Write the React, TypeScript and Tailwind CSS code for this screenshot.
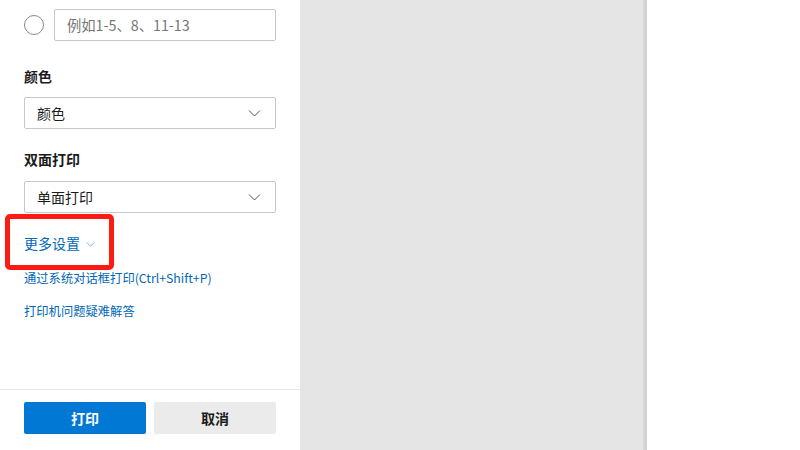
const font = { fontFamily: '"Noto Sans CJK SC", "Noto Sans", sans-serif' };

function Chevron({ className }: { className: string }) {
  return (
    <svg viewBox="0 0 12 7" className={className} fill="none">
      <path d="M0.5 0.5 L6 6 L11.5 0.5" stroke="currentColor" strokeWidth="1" />
    </svg>
  );
}

function Select({ value }: { value: string }) {
  return (
    <div className="flex h-8 items-center justify-between rounded-[2px] border border-[#c8c8c8] bg-white pl-3 pr-[14px] text-sm text-[#1b1b1b]">
      <span>{value}</span>
      <Chevron className="h-[7px] w-[13px] text-[#555]" />
    </div>
  );
}

export default function App() {
  return (
    <div className="flex h-[450px] w-[800px] bg-white" style={font}>
      <div className="relative flex h-full w-[300px] flex-col">
        <div className="flex flex-col px-6 pt-[9px]">
          <div className="flex items-center gap-[10px]">
            <div className="h-5 w-5 rounded-full border border-[#8a8a8a]" />
            <div className="flex h-8 flex-1 items-center rounded-[2px] border border-[#c8c8c8] px-3 text-[14.3px] text-[#767676]">
              例如1-5、8、11-13
            </div>
          </div>

          <div className="mt-[25px] text-sm font-bold leading-5 text-[#1b1b1b]">颜色</div>
          <div className="mt-[11px]">
            <Select value="颜色" />
          </div>

          <div className="mt-5 text-sm font-bold leading-5 text-[#1b1b1b]">双面打印</div>
          <div className="mt-3">
            <Select value="单面打印" />
          </div>

          <div className="mt-[20px] flex items-center gap-[6px] text-sm leading-5 text-[#0067b8]">
            <span>更多设置</span>
            <Chevron className="mt-[3px] h-[5px] w-[9px] text-[#4f95d6]" />
          </div>
          <div className="mt-[17px] text-[12.3px] leading-4 text-[#0067b8]">通过系统对话框打印(Ctrl+Shift+P)</div>
          <div className="mt-[17px] text-[12.3px] leading-4 text-[#0067b8]">打印机问题疑难解答</div>
        </div>

        <div className="flex-1" />

        <div className="border-t border-[#e6e6e6] px-6 pb-4 pt-[12px]">
          <div className="flex gap-2">
            <button className="h-8 flex-1 rounded-[2px] bg-[#0078d4] text-sm font-bold text-white">打印</button>
            <button className="h-8 flex-1 rounded-[2px] bg-[#ebebeb] text-sm font-bold text-[#1b1b1b]">取消</button>
          </div>
        </div>

        <div className="pointer-events-none absolute left-[5px] top-[214px] h-[56px] w-[109px] rounded-[5px] border-[5px] border-[#ff1a12]" />
      </div>

      <div className="h-full w-[343px] bg-[#e5e5e5]" />
      <div className="h-full w-[4px] bg-gradient-to-r from-[#dadada] to-[#cfcfcf]" />
      <div className="h-full flex-1 bg-white" />
    </div>
  );
}
